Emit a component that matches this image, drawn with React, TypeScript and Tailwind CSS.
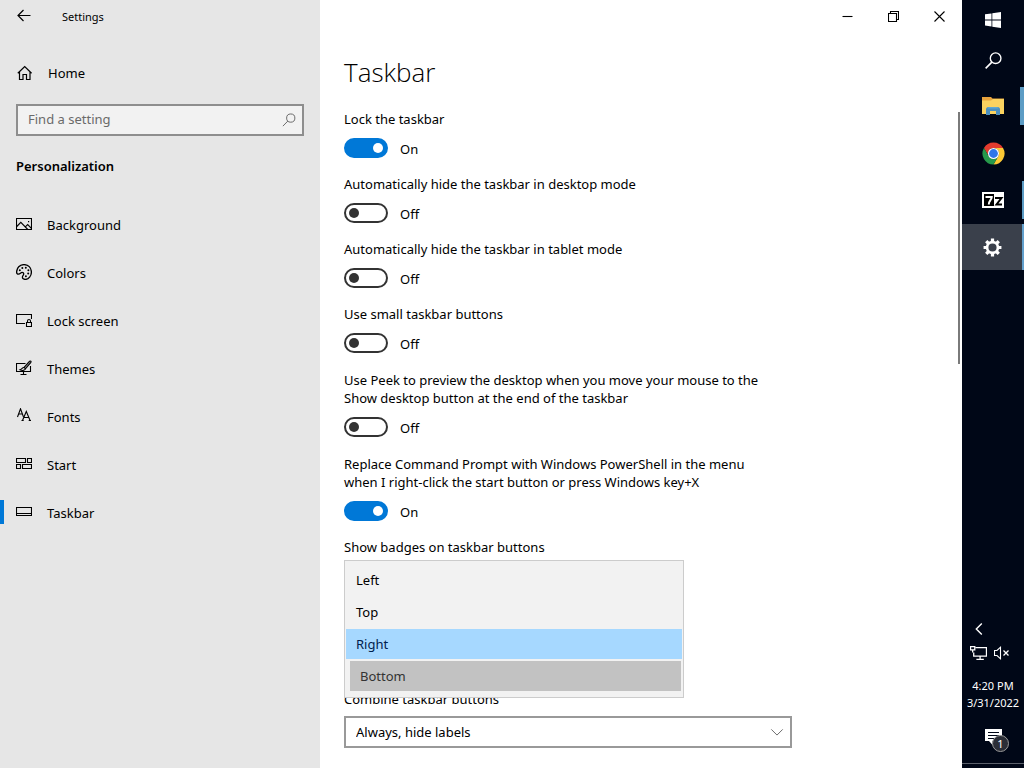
import { useState } from "react";
import clsx from "clsx";

type IconProps = { children: React.ReactNode; className?: string; box?: number };

function Icon({ children, className = "h-4 w-4", box = 16 }: IconProps) {
  return (
    <svg
      viewBox={`0 0 ${box} ${box}`}
      className={clsx("shrink-0", className)}
      fill="none"
      stroke="currentColor"
      strokeWidth="1.1"
      aria-hidden="true"
    >
      {children}
    </svg>
  );
}

const NAV_ITEMS = [
  {
    label: "Background",
    icon: (
      <Icon>
        <path d="M.5 2.5h15v11H.5zM.8 10.5l4-4.2 7 7.2M9.3 10.8l2.4-2.3 3.7 3.8" />
        <path d="M12 5h1.2v1.2H12z" fill="currentColor" stroke="none" />
      </Icon>
    ),
  },
  {
    label: "Colors",
    icon: (
      <Icon>
        <path d="M8 .6c4.2 0 7.4 3 7.4 7.400 0 4-2.700 7.400-6 7.400-1.800 0-3-.8-3-2.300 0-1.500 1.300-2 1.300-3.200 0-1-.7-1.500-1.600-1.500-1.400 0-1.900 1.800-3.600 1.800C1.200 10.200.6 9.300.6 8 .6 3.900 3.800.6 8 .6z" strokeWidth="1.300" />
        <g fill="currentColor" stroke="none">
          <circle cx="3.8" cy="6.3" r="1" />
          <circle cx="6.3" cy="3.9" r="1" />
          <circle cx="9.8" cy="3.7" r="1" />
          <circle cx="12.4" cy="6.2" r="1" />
          <circle cx="12.2" cy="9.6" r="1" />
          <circle cx="9.9" cy="12.2" r="1" />
        </g>
      </Icon>
    ),
  },
  {
    label: "Lock screen",
    icon: (
      <Icon>
        <path d="M9 11.5H.5v-9h15V7" />
        <path d="M10.5 10.5h5v4h-5zM11.5 10.5V9a1.5 1.5 0 0 1 3 0v1.5" />
      </Icon>
    ),
  },
  {
    label: "Themes",
    icon: (
      <Icon>
        <path d="M9.5 3.500h-9v8h14V6M7.500 11.500v3M4.500 14.500h6" />
        <path d="M14.800 1.200c.5.500.3 1-.1 1.500L9.500 8.800 8 7.400l5.400-6c.4-.5 1-.6 1.400-.2z" fill="#888" />
        <path d="M8 7.500c-1.600-.2-2.300 1.800-4 2.300 1.800 1 4.800.9 5.400-1" />
      </Icon>
    ),
  },
  {
    label: "Fonts",
    icon: (
      <Icon>
        <path d="M1.500 9L4.500.8 7.500 9M2.600 6h3.800" />
        <path d="M6.500 12.500l3.800-9 3.800 9M8 9.500h4.600M5.500 12.500h2.200M12.700 12.500h2.300" />
      </Icon>
    ),
  },
  {
    label: "Start",
    icon: (
      <Icon>
        <path d="M.5 2.500h9v4h-9zM11.500 2.500h4v4h-4zM.5 8.500h4v4h-4zM6.500 8.500h9v4h-9z" />
      </Icon>
    ),
  },
  {
    label: "Taskbar",
    icon: (
      <Icon>
        <path d="M.5 3.500h15v8H.5zM.5 9.500h15" />
      </Icon>
    ),
  },
];

const TOGGLES = [
  { id: "lock", label: "Lock the taskbar", on: true },
  { id: "hide-desktop", label: "Automatically hide the taskbar in desktop mode", on: false },
  { id: "hide-tablet", label: "Automatically hide the taskbar in tablet mode", on: false },
  { id: "small", label: "Use small taskbar buttons", on: false },
  {
    id: "peek",
    label: "Use Peek to preview the desktop when you move your mouse to the Show desktop button at the end of the taskbar",
    on: false,
    multiline: true,
  },
  {
    id: "powershell",
    label: "Replace Command Prompt with Windows PowerShell in the menu when I right-click the start button or press Windows key+X",
    on: true,
    multiline: true,
  },
];

const LOCATIONS = ["Left", "Top", "Right", "Bottom"];

type ToggleProps = { id: string; label: string; on: boolean; multiline?: boolean };

function Toggle({ id, label, on, multiline }: ToggleProps) {
  const [checked, setChecked] = useState(on);

  return (
    <div className={clsx("mb-[17px]", multiline && "pt-px")}>
      <label htmlFor={id} className="block max-w-[436px]">
        {label}
      </label>
      <div className="mt-2.5 flex h-5 items-center gap-3">
        <input
          id={id}
          type="checkbox"
          checked={checked}
          onChange={(e) => setChecked(e.target.checked)}
          className="flex h-5 w-11 shrink-0 appearance-none items-center rounded-full border-2 border-[#333] px-[3px] before:h-2.5 before:w-2.5 before:rounded-full before:bg-[#333] before:content-[''] checked:justify-end checked:border-[#0078d7] checked:bg-[#0078d7] checked:before:bg-white"
        />
        <span className="pt-0.5">{checked ? "On" : "Off"}</span>
      </div>
    </div>
  );
}

function Sidebar() {
  return (
    <aside className="w-80 shrink-0 bg-[#e6e6e6]">
      <div className="flex h-8 items-center px-4">
        <button aria-label="Back">
          <Icon>
            <path d="M14.5 7.500H2M7.500 2L2 7.500 7.500 13" strokeWidth="1.200" />
          </Icon>
        </button>
        <span className="ml-[30px] pt-0.5 text-[11px]">Settings</span>
      </div>

      <a href="#home" className="mt-4 flex h-12 items-center gap-4 px-4 pt-0.5">
        <Icon>
          <path d="M1.800 8.200L8.700 1.500l6.900 6.700M3.500 6.700v7.800h3.500v-5h3.500v5H14V6.700" strokeWidth="1.200" />
        </Icon>
        Home
      </a>

      <div className="mx-4 mt-2 flex h-8 items-center border-2 border-[#8e8e8e] bg-[#f2f2f2] pr-1.5 pl-2.5">
        <input
          type="search"
          aria-label="Find a setting"
          placeholder="Find a setting"
          className="min-w-0 flex-1 bg-transparent pb-0.5 outline-none placeholder:text-[#6a6a6a]"
        />
        <Icon className="h-[14px] w-[14px] text-[#666]">
          <circle cx="10" cy="5.800" r="4.700" />
          <path d="M6.700 9.200L1 15" />
        </Icon>
      </div>

      <h2 className="mt-[21px] px-4 font-semibold">Personalization</h2>

      <nav className="mt-[25px]">
        {NAV_ITEMS.map((item) => {
          const active = item.label === "Taskbar";
          return (
            <a
              key={item.label}
              href={`#${item.label}`}
              aria-current={active ? "page" : undefined}
              className="flex h-12 items-center"
            >
              <span className={clsx("h-6 w-1", active && "bg-[#0078d7]")} />
              <span className="flex items-center gap-[15px] pl-3">
                {item.icon}
                <span className="pt-0.5">{item.label}</span>
              </span>
            </a>
          );
        })}
      </nav>
    </aside>
  );
}

function WindowControls() {
  return (
    <div className="flex h-8 shrink-0 justify-end">
      <button aria-label="Minimize" className="flex w-[46px] items-center justify-center">
        <Icon className="h-[11px] w-[11px]" box={11}>
          <path d="M.5 5.500h10" />
        </Icon>
      </button>
      <button aria-label="Restore" className="flex w-[46px] items-center justify-center">
        <Icon className="h-[11px] w-[11px]" box={11}>
          <path d="M.5 2.500h8v8h-8zM2.500 2.500v-2h8v8h-2" />
        </Icon>
      </button>
      <button aria-label="Close" className="flex w-[46px] items-center justify-center">
        <Icon className="h-[11px] w-[11px]" box={11}>
          <path d="M.5.5l10 10M10.500.5l-10 10" />
        </Icon>
      </button>
    </div>
  );
}

function LocationList() {
  return (
    <div
      role="listbox"
      aria-label="Taskbar location on screen"
      className="relative z-10 mt-1 -mb-2 flex h-[138px] w-[340px] flex-col gap-0.5 border border-[#ccc] bg-[#f2f2f2] px-px pt-1"
    >
      {LOCATIONS.map((name) => (
        <button
          key={name}
          role="option"
          aria-selected={name === "Right"}
          className={clsx(
            "h-[30px] px-2.5 text-left",
            name === "Right" && "bg-[#a6d8ff] text-[#00204e]",
            name === "Bottom" && "mr-px ml-1 bg-[#c2c2c2] text-[#333]"
          )}
        >
          {name}
        </button>
      ))}
    </div>
  );
}

function TaskbarSettings() {
  return (
    <main className="flex min-w-0 flex-1 flex-col overflow-hidden bg-white">
      <WindowControls />
      <div className="flex items-start justify-between">
        <div className="min-w-0 flex-1 px-6 pt-5">
          <h1 className="font-['Open_Sans','Noto_Sans',sans-serif] text-[26px] leading-10 font-light">
            Taskbar
          </h1>
          <div className="mt-[18px]">
            {TOGGLES.map((t) => (
              <Toggle key={t.id} {...t} />
            ))}
            <p>Show badges on taskbar buttons</p>
            <LocationList />
            <label htmlFor="combine" className="block">
              Combine taskbar buttons
            </label>
            <div className="mt-2 grid max-w-[448px] items-center">
              <select
                id="combine"
                className="col-start-1 row-start-1 h-8 w-full appearance-none border-2 border-[#999] bg-white px-2.5"
              >
                <option>Always, hide labels</option>
                <option>When taskbar is full</option>
                <option>Never</option>
              </select>
              <Icon className="pointer-events-none col-start-1 row-start-1 mr-2 h-[14px] w-[14px] justify-self-end text-[#666]">
                <path d="M1.500 5L8 11.500 14.500 5" />
              </Icon>
            </div>
          </div>
        </div>
        {/* scroll thumb */}
        <div className="mt-20 mr-0.5 h-[252px] w-0.5 bg-[#7a7a7a]" />
      </div>
    </main>
  );
}

function Taskbar() {
  return (
    <aside className="flex w-[62px] shrink-0 flex-col bg-[#000717] text-white">
      <button aria-label="Start" className="flex h-10 items-center justify-center">
        <svg viewBox="0 0 16 16" className="h-4 w-4" fill="currentColor">
          <path d="M0 2.300l6.500-.9v6.100H0zM7.300 1.300L16 0v7.500H7.300zM0 8.400h6.500v6.100L0 13.600zM7.300 8.400H16V16l-8.700-1.300z" />
        </svg>
      </button>
      <button aria-label="Search" className="flex h-10 items-center justify-center">
        <Icon className="h-[17px] w-[17px]">
          <circle cx="10" cy="5.800" r="5" strokeWidth="1.300" />
          <path d="M6.500 9.500L.6 15.400" strokeWidth="1.500" />
        </Icon>
      </button>

      <div className="mt-[3px] flex flex-col gap-px">
        <button aria-label="File Explorer" className="flex h-[46px] items-center">
          <span className="flex flex-1 justify-center pl-1">
            <svg viewBox="0 0 22 18" className="h-[18px] w-[22px]">
              <path d="M0 0h9l1.500 1.500H22V17H0z" fill="#e8a33d" />
              <path d="M0 3.500h9L11 2h11v15H0z" fill="#fbd25f" />
              <path d="M4 18v-5.500q0-2.500 2.500-2.500h9q2.500 0 2.500 2.500V18h-4v-4H8v4z" fill="#4c8fbe" />
              <path d="M6.500 10h9l1 1.500h-11z" fill="#5fa8d4" />
            </svg>
          </span>
          <span className="h-[38px] w-1 bg-[#5c9cc5]" />
        </button>
        <button aria-label="Google Chrome" className="flex h-[46px] items-center justify-center">
          <svg viewBox="0 0 24 24" className="h-[23px] w-[23px]">
            <path d="M2.040 6.250A11.500 11.500 0 0 1 21.960 6.250H12A5.750 5.750 0 0 0 7.020 14.880z" fill="#e33b2e" />
            <path d="M21.960 6.250A11.500 11.500 0 0 1 12 23.500L16.980 14.880A5.750 5.750 0 0 0 12 6.250z" fill="#fcc934" />
            <path d="M12 23.500A11.500 11.500 0 0 1 2.040 6.250L7.020 14.880A5.750 5.750 0 0 0 16.980 14.880z" fill="#26994b" />
            <circle cx="12" cy="12" r="5.800" fill="#fff" />
            <circle cx="12" cy="12" r="4.600" fill="#2f76e8" />
          </svg>
        </button>
        <button aria-label="7-Zip File Manager" className="flex h-[46px] items-center">
          <span className="flex flex-1 justify-center pl-0.5">
            <svg viewBox="0 0 22 16" className="h-4 w-[22px]" fill="none">
              <path d="M0 0h22v16H0z" fill="#fff" />
              <path d="M2 2h10v12H2z" fill="#000" />
              <path d="M3.500 5h6.300c0 2.500-3 3.500-3 7.500" stroke="#fff" strokeWidth="2" />
              <path d="M13 6h6.500L14.500 12.500H20" stroke="#000" strokeWidth="2" />
            </svg>
          </span>
          <span className="h-[38px] w-0.5 bg-[#5c9cc5]" />
        </button>
        <button aria-label="Settings" className="flex h-[46px] items-center bg-[#3a404b]">
          <span className="flex flex-1 justify-center">
            <svg viewBox="0 0 20 20" className="h-[19px] w-[19px]" fill="none" stroke="currentColor">
              <circle cx="10" cy="10" r="5.700" strokeWidth="2.800" />
              <g strokeWidth="3.400">
                <path d="M10 .6v3.400M10 16v3.400M.6 10H4M16 10h3.400" />
                <path d="M3.400 3.400l2.400 2.400M14.200 14.200l2.400 2.400M16.600 3.400l-2.400 2.400M5.800 14.200l-2.400 2.400" />
              </g>
            </svg>
          </span>
          <span className="h-[46px] w-0.5 bg-[#62a0cd]" />
        </button>
      </div>

      {/* Tray */}
      <div className="mt-auto flex flex-col">
        <button aria-label="Show hidden icons" className="flex h-6 items-center pl-2.5">
          <Icon className="h-[14px] w-[14px]" box={14}>
            <path d="M9.800 1.500L4.300 7l5.500 5.500" strokeWidth="1.400" />
          </Icon>
        </button>
        <div className="flex h-6 items-center gap-[7px] pl-2">
          <button aria-label="Network">
            <Icon className="h-[17px] w-[17px]">
              <path d="M5 2.500h10.500v8H3.500V7M9.500 10.500v3M6 13.500h7" strokeWidth="1.200" />
              <path d="M.5 1.500h4v3h-4zM2.500 4.500V7" strokeWidth="1.200" />
            </Icon>
          </button>
          <button aria-label="Volume muted">
            <Icon>
              <path d="M.5 5.500H3l3.500-3.300v11.600L3 10.500H.5z" />
              <path d="M9.500 5.500l5 5M14.500 5.500l-5 5" strokeWidth="1.300" />
            </Icon>
          </button>
        </div>
        <button className="mt-3 text-center text-[11px] leading-[17px] whitespace-nowrap">
          4:20 PM
          <br />
          3/31/2022
        </button>
        <button aria-label="1 new notification" className="relative mt-4 flex h-7 justify-center pt-0.5">
          <svg viewBox="0 0 17 16" className="h-4 w-[17px]">
            <path d="M0 0h17v12H7.500v4L4 12H0z" fill="#fff" />
            <path d="M3 3.500h11M3 6.500h11M3 9.500h7" stroke="#000717" strokeWidth="1" />
          </svg>
          <span className="absolute top-2 left-[30px] flex h-[17px] w-[17px] items-center justify-center rounded-full border border-[#999] bg-[#2b2e37] text-[11px]">
            1
          </span>
        </button>
        <button aria-label="Show desktop" className="mt-2 h-[5px] border-t border-[#5b606b]" />
      </div>
    </aside>
  );
}

export default function App() {
  return (
    <div className="flex h-screen overflow-hidden font-['Noto_Sans','Open_Sans',sans-serif] text-[13px] leading-[18px] text-black">
      <Sidebar />
      <TaskbarSettings />
      <Taskbar />
    </div>
  );
}
